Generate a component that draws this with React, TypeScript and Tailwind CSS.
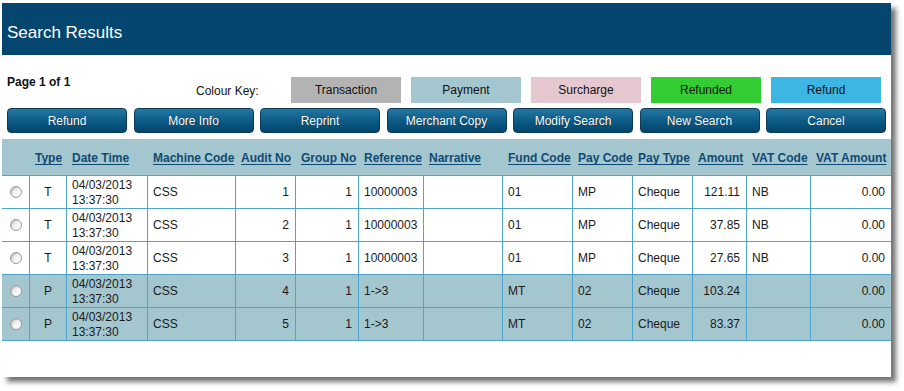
import React from "react";

const cols = "grid-cols-[28px_37px_81px_88px_60px_63px_65px_79px_70px_60px_60px_54px_64px_80px]";

type Row = {
  type: string;
  audit: string;
  group: string;
  ref: string;
  fund: string;
  pay: string;
  amount: string;
  vat: string;
  payment: boolean;
};

const rows: Row[] = [
  { type: "T", audit: "1", group: "1", ref: "10000003", fund: "01", pay: "MP", amount: "121.11", vat: "NB", payment: false },
  { type: "T", audit: "2", group: "1", ref: "10000003", fund: "01", pay: "MP", amount: "37.85", vat: "NB", payment: false },
  { type: "T", audit: "3", group: "1", ref: "10000003", fund: "01", pay: "MP", amount: "27.65", vat: "NB", payment: false },
  { type: "P", audit: "4", group: "1", ref: "1->3", fund: "MT", pay: "02", amount: "103.24", vat: "", payment: true },
  { type: "P", audit: "5", group: "1", ref: "1->3", fund: "MT", pay: "02", amount: "83.37", vat: "", payment: true },
];

const headers = [
  "",
  "Type",
  "Date Time",
  "Machine Code",
  "Audit No",
  "Group No",
  "Reference",
  "Narrative",
  "Fund Code",
  "Pay Code",
  "Pay Type",
  "Amount",
  "VAT Code",
  "VAT Amount",
];

const keys = [
  { label: "Transaction", cls: "bg-[#b3b3b3]" },
  { label: "Payment", cls: "bg-[#a4c6cf]" },
  { label: "Surcharge", cls: "bg-[#e6c9d0]" },
  { label: "Refunded", cls: "bg-[#33cc33]" },
  { label: "Refund", cls: "bg-[#3db6e4]" },
];

const buttons = ["Refund", "More Info", "Reprint", "Merchant Copy", "Modify Search", "New Search", "Cancel"];

function Cell({ children, right, center, last }: { children?: React.ReactNode; right?: boolean; center?: boolean; last?: boolean }) {
  return (
    <div
      className={
        "flex items-center h-full " +
        (last ? "" : "border-r border-[#4ea3cf] ") +
        (right ? "justify-end pr-[6px] " : center ? "justify-center " : "pl-[5px] ")
      }
    >
      {children}
    </div>
  );
}

export default function App() {
  return (
    <div
      className="w-[904px] h-[391px] bg-white pt-[3px] pl-[2px] overflow-hidden"
      style={{ fontFamily: '"Liberation Sans", Arial, sans-serif' }}
    >
      <div className="w-[889px] h-[374px] bg-white shadow-[5px_5px_5px_rgba(0,0,0,0.55)]">
        <div className="h-[52px] bg-[#04466e] flex items-center pl-[5px] pt-[7px]">
          <span className="text-white text-[17px]">Search Results</span>
        </div>

        <div className="pl-[5px] pt-[22px]">
          <div className="flex items-start h-[26px]">
            <div className="w-[189px] text-[12px] font-bold text-[#111] leading-[14px] -mt-[2px]">Page 1 of 1</div>
            <div className="w-[95px] text-[12px] text-[#111] h-[26px] flex items-center pt-[2px]">Colour Key:</div>
            <div className="flex gap-[10px]">
              {keys.map((k) => (
                <div
                  key={k.label}
                  className={"w-[110px] h-[26px] flex items-center justify-center text-[12px] text-[#111] " + k.cls}
                >
                  {k.label}
                </div>
              ))}
            </div>
          </div>

          <div className="grid grid-cols-7 gap-x-[6.5px] w-[879px] mt-[5px]">
            {buttons.map((b) => (
              <div
                key={b}
                className="h-[25px] rounded-[4px] border border-[#0c3a57] bg-gradient-to-b from-[#2477a2] via-[#0d5c88] to-[#03456d] flex items-center justify-center text-white text-[12px] [text-shadow:0_0_1px_rgba(0,0,0,0.6)]"
              >
                {b}
              </div>
            ))}
          </div>
        </div>

        <div className="mt-[6px] w-[889px]">
          <div className={"grid h-[36px] bg-[#a4c6cf] " + cols}>
            {headers.map((h, i) => (
              <div key={i} className="flex items-center pl-[5px] pt-[2px]">
                <span className="text-[12px] font-bold text-[#0f4a74] underline underline-offset-[2px] whitespace-nowrap">{h}</span>
              </div>
            ))}
          </div>
          {rows.map((r, i) => (
            <div
              key={i}
              className={
                "grid h-[33px] border-t border-[#4ea3cf] text-[12px] text-[#1a1a1a] " +
                cols +
                (i === rows.length - 1 ? " border-b h-[34px]" : "") +
                (r.payment ? " bg-[#a4c6cf]" : " bg-white")
              }
            >
              <Cell center>
                <span className="w-[12px] h-[12px] rounded-full border border-[#9a9a9a] bg-gradient-to-br from-[#d8d8d8] via-[#f4f4f4] to-[#ffffff] shadow-[inset_1px_1px_1px_rgba(0,0,0,0.15)]" />
              </Cell>
              <Cell center>{r.type}</Cell>
              <Cell>
                <div className="leading-[15px] pt-[1px]">
                  <div>04/03/2013</div>
                  <div>13:37:30</div>
                </div>
              </Cell>
              <Cell>CSS</Cell>
              <Cell right>{r.audit}</Cell>
              <Cell right>{r.group}</Cell>
              <Cell>{r.ref}</Cell>
              <Cell />
              <Cell>{r.fund}</Cell>
              <Cell>{r.pay}</Cell>
              <Cell>Cheque</Cell>
              <Cell right>{r.amount}</Cell>
              <Cell>{r.vat}</Cell>
              <Cell right last>0.00</Cell>
            </div>
          ))}
        </div>
      </div>
    </div>
  );
}
